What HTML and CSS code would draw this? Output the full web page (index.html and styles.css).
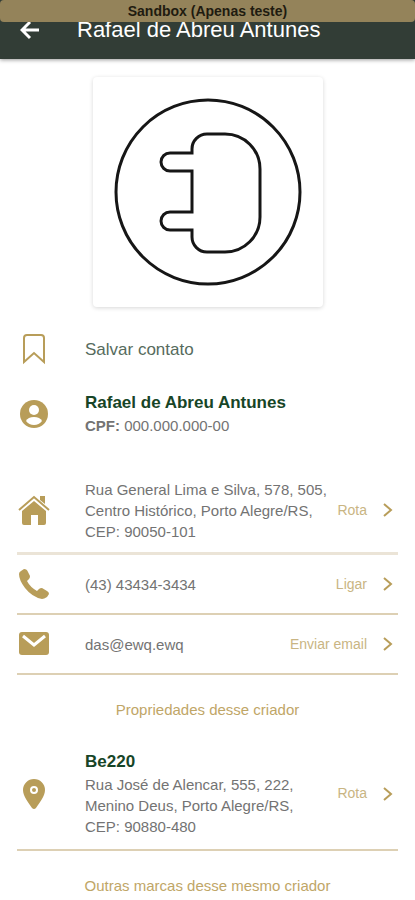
FILE: index.html
```html
<!DOCTYPE html>
<html lang="pt-BR">
<head>
<meta charset="utf-8">
<meta name="viewport" content="width=device-width, initial-scale=1">
<title>Rafael de Abreu Antunes</title>
<link rel="stylesheet" href="styles.css">
</head>
<body>
<div class="banner">Sandbox (Apenas teste)</div>
<header class="topbar">
  <button class="back" type="button" aria-label="Voltar">
    <svg width="20" height="20" viewBox="0 0 20 20" fill="none" stroke="currentColor" stroke-width="3"><path d="M19 10H3M10 2L2 10l8 8"/></svg>
  </button>
  <h1 class="title">Rafael de Abreu Antunes</h1>
</header>
<main class="page">
  <div class="brand">
    <svg viewBox="0 0 230 230" fill="none" stroke="#161616" stroke-width="3">
      <circle cx="115" cy="115" r="92"/>
      <path d="M114 57H132A35 35 0 0 1 167 92V140A35 35 0 0 1 132 175H114A15 15 0 0 1 99 160V153H77A9 9 0 0 1 77 135H99V94H77A9 9 0 0 1 77 76H99V72A15 15 0 0 1 114 57Z"/>
    </svg>
  </div>

  <button class="row save" type="button">
    <span class="icon"><svg width="32" height="32" viewBox="0 0 32 32" fill="none" stroke="currentColor" stroke-width="2"><path d="M6 29V5Q6 2 9 2H23Q26 2 26 5V29L16 20Z"/></svg></span>
    <span class="save-label">Salvar contato</span>
  </button>

  <section class="row person">
    <span class="icon"><svg width="32" height="32" viewBox="0 0 32 32"><circle cx="16" cy="16" r="14" fill="currentColor"/><circle cx="16" cy="12" r="5" fill="#fff"/><path d="M8 23Q10 19 16 19T24 23Q21 27 16 27T8 23Z" fill="#fff"/></svg></span>
    <div class="info">
      <h2 class="name">Rafael de Abreu Antunes</h2>
      <p><b>CPF:</b> 000.000.000-00</p>
    </div>
  </section>

  <a class="row entry address" href="#rota">
    <span class="icon"><svg width="32" height="32" viewBox="0 0 32 32" fill="currentColor"><path d="M22 2H27V10L22 6Z"/><path d="M1 16L16 3L31 16" fill="none" stroke="currentColor" stroke-width="2"/><path d="M16 7L28 17V29Q28 31 26 31H20V21H13V31H6Q4 31 4 29V17Z"/></svg></span>
    <span class="info">Rua General Lima e Silva, 578, 505, Centro Histórico, Porto Alegre/RS, CEP: 90050-101</span>
    <span class="action">Rota</span>
    <svg class="chevron" width="10" height="16" viewBox="0 0 10 16"><path d="M1 2l7 6-7 6"/></svg>
  </a>
  <a class="row entry" href="#ligar">
    <span class="icon"><svg width="32" height="32" viewBox="0 0 32 32" fill="currentColor"><path d="M3 3L6 1Q9 1 10 4L12 8Q12 10 11 11L9 13Q12 19 19 23L21 21Q22 20 24 20L29 23Q31 24 31 26L29 29Q26 31 24 31Q14 29 7 20Q1 12 1 6Q1 4 3 3Z"/></svg></span>
    <span class="info">(43) 43434-3434</span>
    <span class="action">Ligar</span>
    <svg class="chevron" width="10" height="16" viewBox="0 0 10 16"><path d="M1 2l7 6-7 6"/></svg>
  </a>
  <a class="row entry" href="#email">
    <span class="icon"><svg width="32" height="32" viewBox="0 0 32 32"><rect x="1" y="4" width="30" height="23" rx="3" fill="currentColor"/><path d="M5 8L16 17L27 8" fill="none" stroke="#fff" stroke-width="3"/></svg></span>
    <span class="info">das@ewq.ewq</span>
    <span class="action">Enviar email</span>
    <svg class="chevron" width="10" height="16" viewBox="0 0 10 16"><path d="M1 2l7 6-7 6"/></svg>
  </a>

  <h3 class="section-title">Propriedades desse criador</h3>

  <a class="row entry property" href="#propriedade">
    <span class="icon"><svg width="32" height="32" viewBox="0 0 32 32"><path d="M16 1A11 11 0 0 1 27 12C27 18 22 24 18 30Q16 32 14 30C10 24 5 18 5 12A11 11 0 0 1 16 1Z" fill="currentColor"/><circle cx="16" cy="12" r="3" fill="none" stroke="#fff" stroke-width="2"/></svg></span>
    <span class="info"><strong class="name">Be220</strong>Rua José de Alencar, 555, 222, Menino Deus, Porto Alegre/RS, CEP: 90880-480</span>
    <span class="action">Rota</span>
    <svg class="chevron" width="10" height="16" viewBox="0 0 10 16"><path d="M1 2l7 6-7 6"/></svg>
  </a>

  <h3 class="section-title">Outras marcas desse mesmo criador</h3>
</main>
</body>
</html>
```
FILE: styles.css
```css
* { box-sizing: border-box; }
body {
  margin: 0;
  background: #fff;
  color: #737373;
  font: 15px/21px "Liberation Sans", Arial, sans-serif;
}
h1, h2, h3, p { margin: 0; }
button { border: 0; padding: 0; background: none; font: inherit; cursor: pointer; }
svg { display: block; flex: none; }

.banner {
  position: absolute;
  top: 0;
  left: 0;
  right: 0;
  z-index: 1;
  height: 22px;
  border-radius: 4px;
  background: #94835a;
  color: #1f1b10;
  font-size: 14px;
  line-height: 22px;
  font-weight: bold;
  text-align: center;
}
.topbar {
  display: flex;
  align-items: center;
  height: 59px;
  padding: 0 20px;
  background: #323d36;
  color: #fff;
  box-shadow: 0 1px 4px rgba(0, 0, 0, 0.4);
}
.back { width: 57px; color: inherit; }
.title { font-size: 22px; line-height: 28px; font-weight: normal; }

.page { padding: 18px 17px; }
.brand {
  width: 230px;
  margin: 0 auto 22px;
  border-radius: 4px;
  box-shadow: 0 1px 4px rgba(0, 0, 0, 0.16);
}

.row { display: flex; align-items: center; width: 100%; color: inherit; text-align: left; text-decoration: none; }
.icon { flex: none; width: 68px; padding-left: 1px; color: #b89d59; }
.info { flex: 1; }
.save { height: 40px; }
.save-label { color: #566b5d; font-size: 17px; }
.person { height: 89px; }
.name { display: block; color: #174527; font-size: 17px; line-height: 24px; font-weight: bold; }
.entry { height: 60px; border-bottom: 2px solid #ddd0b4; }
.entry .info { padding-right: 8px; }
.address { height: 97px; padding-top: 10px; border-bottom: 3px solid #ebe4d7; }
.action { color: #c9b583; font-size: 14px; }
.chevron { margin: 0 5px 0 16px; fill: none; stroke: #b89d59; stroke-width: 2; }
.section-title { padding: 24px 0; color: #bfa667; font-size: 15px; font-weight: normal; text-align: center; }
.property { height: 107px; padding-bottom: 6px; }
```
